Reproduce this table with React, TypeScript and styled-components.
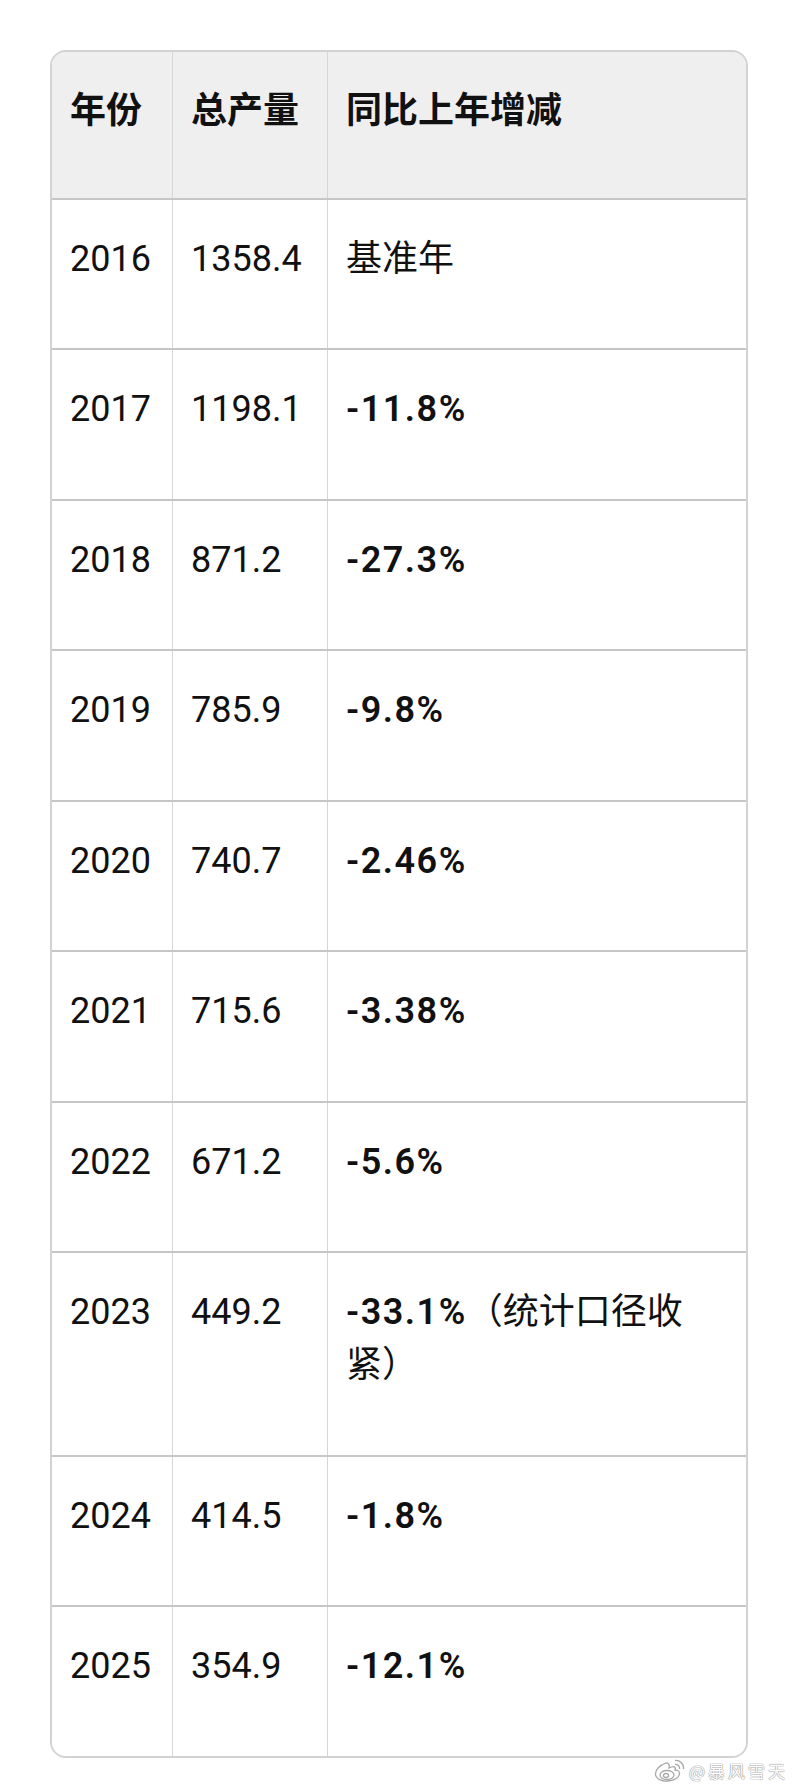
import React from "react";
import styled, { createGlobalStyle } from "styled-components";

const Global = createGlobalStyle`
  html, body { margin: 0; padding: 0; background: #ffffff; }
  body { font-family: Roboto, "Noto Sans CJK SC", sans-serif; color: #111; }
`;

const Page = styled.div`
  position: relative;
  width: 798px;
  height: 1789px;
  box-sizing: border-box;
  padding: 50px 50px 0 50px;
  overflow: hidden;
`;

const Card = styled.div`
  border: 2px solid #d2d2d2;
  border-radius: 16px;
  overflow: hidden;
  background: #ffffff;
`;

const Row = styled.div<{ $head?: boolean; $last?: boolean }>`
  display: grid;
  grid-template-columns: 120px 155px 1fr;
  background: ${(p) => (p.$head ? "#efefef" : "#ffffff")};
  border-bottom: ${(p) => (p.$last ? "none" : "2px solid #c6c6c6")};
`;

const Cell = styled.div<{ $head?: boolean; $first?: boolean }>`
  box-sizing: border-box;
  min-width: 0;
  padding: 33px 18px ${(p) => (p.$head ? "59.5px" : "62.5px")} 18px;
  border-left: ${(p) => (p.$first ? "none" : "1px solid #d6d6d6")};
  font-family: Roboto, "Noto Sans CJK SC", sans-serif;
  font-size: 36px;
  line-height: 53px;
  font-weight: ${(p) => (p.$head ? 700 : 400)};
  color: #111111;
`;

const Strong = styled.span`
  font-weight: 600;
  letter-spacing: 1.5px;
`;

const Watermark = styled.div`
  position: absolute;
  right: 10px;
  bottom: 6px;
  display: flex;
  align-items: center;
  gap: 2px;
`;

const MarkText = styled.span`
  font-family: "Noto Sans CJK SC", sans-serif;
  font-size: 17px;
  letter-spacing: 3px;
  color: #ffffff;
  text-shadow: 0 0 1px #9a9a9a, 0 0 1px #9a9a9a, 0 0 1px #9a9a9a;
`;

const WeiboLogo = () => (
  <svg width="34" height="26" viewBox="0 0 34 26">
    <g fill="#ffffff" stroke="#a8a8a8" strokeWidth="1.3">
      <path d="M13 6 C7 8 2 13 2.5 17.5 C3 22 9 24.5 15 24 C22 23.5 27 20 26.5 16 C26.2 13.5 23.5 12.8 22 13.3 C23 10.5 21.5 9 18.5 10 C17 10.5 16 11 16 11 C16.5 8.5 16 5.5 13 6 Z" />
      <ellipse cx="14" cy="18" rx="7" ry="4.5" />
      <ellipse cx="13" cy="18.5" rx="2.5" ry="2" />
      <path d="M22 3.5 C27 3 31 7 30.5 12" fill="none" />
      <path d="M22 7.5 C25 7.2 27 9.5 26.6 12" fill="none" />
    </g>
  </svg>
);

/* Insert break opportunities between CJK characters (not before closing punctuation). */
const Breakable = ({ text }: { text: string }) => {
  const chars = Array.from(text);
  return (
    <>
      {chars.map((c, i) => {
        const next = chars[i + 1];
        const allow = next !== undefined && c !== "（" && next !== "）";
        return (
          <React.Fragment key={i}>
            {c}
            {allow ? <wbr /> : null}
          </React.Fragment>
        );
      })}
    </>
  );
};

type Item = { year: string; total: string; pct: string; note?: string; base?: boolean };

const data: Item[] = [
  { year: "2016", total: "1358.4", pct: "基准年", base: true },
  { year: "2017", total: "1198.1", pct: "-11.8%" },
  { year: "2018", total: "871.2", pct: "-27.3%" },
  { year: "2019", total: "785.9", pct: "-9.8%" },
  { year: "2020", total: "740.7", pct: "-2.46%" },
  { year: "2021", total: "715.6", pct: "-3.38%" },
  { year: "2022", total: "671.2", pct: "-5.6%" },
  { year: "2023", total: "449.2", pct: "-33.1%", note: "（统计口径收紧）" },
  { year: "2024", total: "414.5", pct: "-1.8%" },
  { year: "2025", total: "354.9", pct: "-12.1%" },
];

export default function App() {
  return (
    <>
      <Global />
      <Page lang="zh-CN">
        <Card>
          <Row $head>
            <Cell $head $first>年份</Cell>
            <Cell $head>总产量</Cell>
            <Cell $head>同比上年增减</Cell>
          </Row>
          {data.map((d, i) => (
            <Row key={d.year} $last={i === data.length - 1}>
              <Cell $first>{d.year}</Cell>
              <Cell>{d.total}</Cell>
              <Cell>
                {d.base ? (
                  d.pct
                ) : (
                  <>
                    <Strong>{d.pct}</Strong>
                    {d.note ? <Breakable text={d.note} /> : null}
                  </>
                )}
              </Cell>
            </Row>
          ))}
        </Card>
        <Watermark>
          <WeiboLogo />
          <MarkText>@暴风雪天</MarkText>
        </Watermark>
      </Page>
    </>
  );
}
